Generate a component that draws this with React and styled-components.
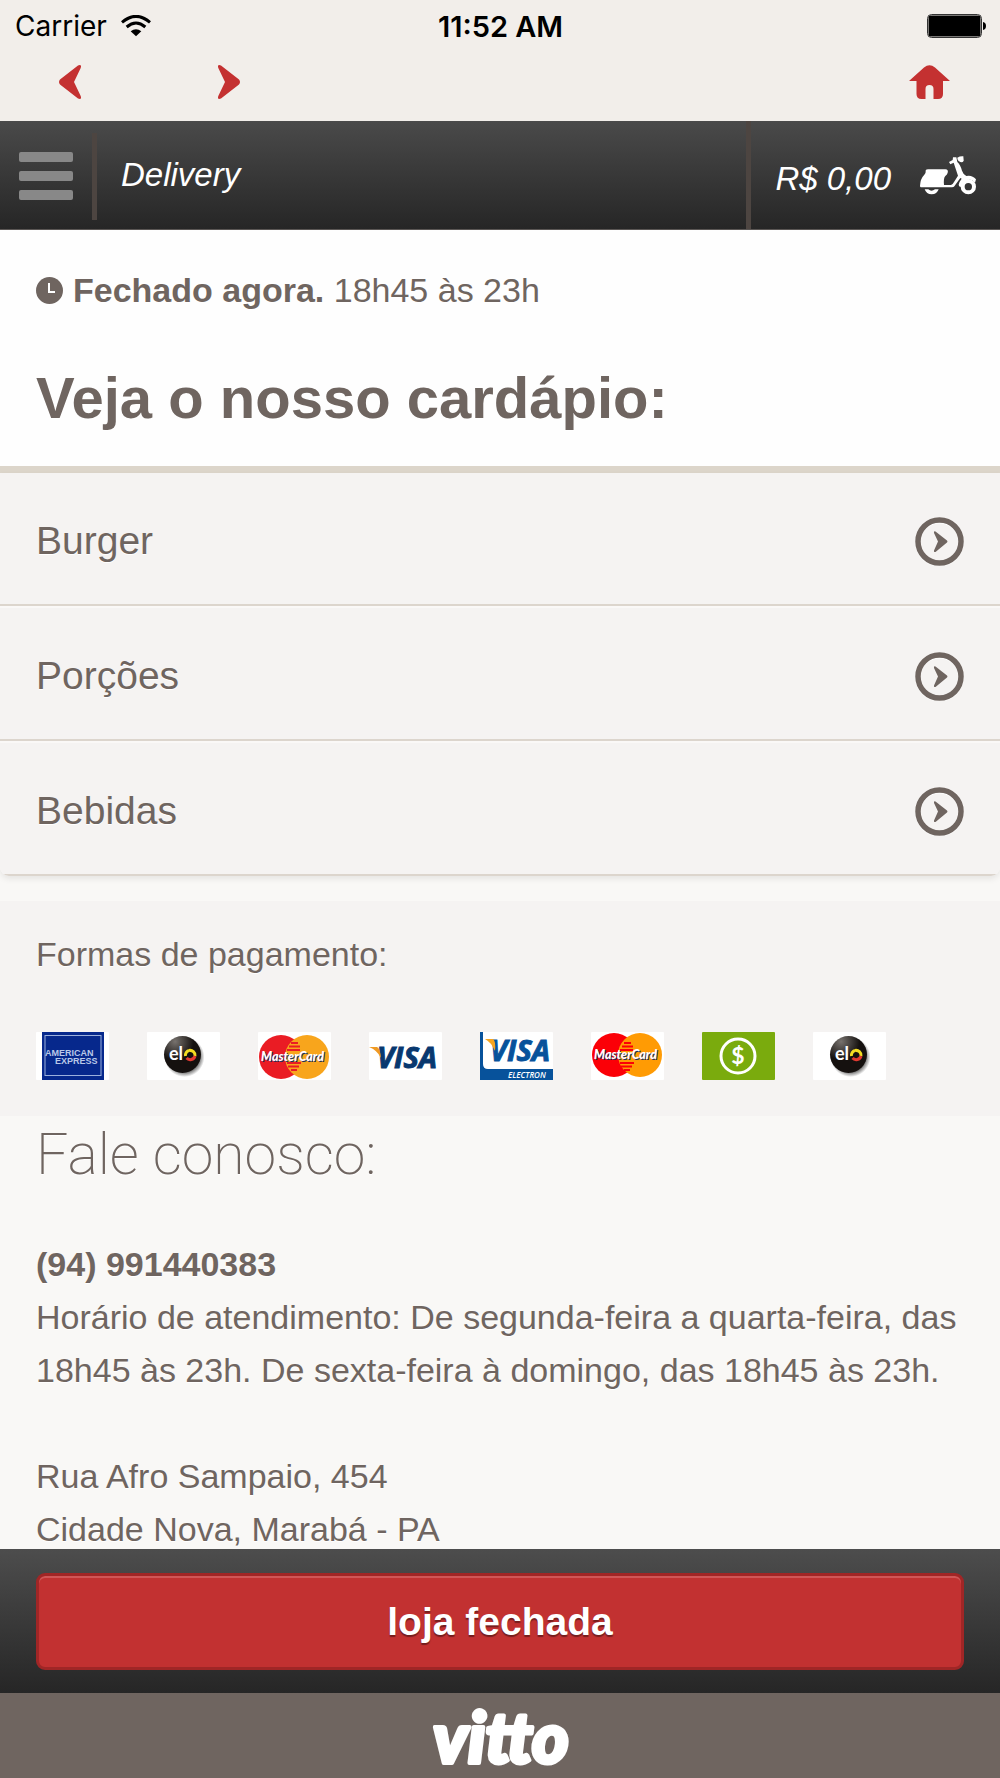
import React from 'react';
import styled, { createGlobalStyle } from 'styled-components';

const GlobalStyle = createGlobalStyle`
  * {
    box-sizing: border-box;
  }

  body {
    margin: 0;
    background: #f9f8f6;
    color: #6f6560;
    font-family: 'Liberation Sans', Arial, sans-serif;
    font-size: 34px;
  }

  svg {
    display: block;
    flex: none;
  }
`;

const Screen = styled.div`
  display: flex;
  flex-direction: column;
  height: 100vh;
`;

const TopBar = styled.div`
  flex: none;
  padding-bottom: 9px;
  background: #f2eeea;
`;

const StatusBar = styled.div`
  display: grid;
  grid-template-columns: 1fr auto 1fr;
  align-items: center;
  height: 52px;
  padding: 0 14px 0 15px;
  color: #000;
  font-family: Inter, sans-serif;
  font-size: 28px;
`;

const Carrier = styled.div`
  display: flex;
  align-items: center;
  gap: 14px;
`;

const Time = styled.time`
  font-size: 29px;
  font-weight: 600;
`;

const Battery = styled.div`
  justify-self: end;
`;

const BrowserNav = styled.nav`
  display: flex;
  align-items: center;
  height: 60px;
  padding: 0 50px 0 59px;
`;

const IconButton = styled.button`
  margin: 0;
  padding: 0;
  border: 0;
  background: none;
  color: #c43131;
  cursor: pointer;

  & + & {
    margin-left: 137px;
  }

  &:last-child {
    margin-left: auto;
  }
`;

const Header = styled.header`
  display: flex;
  flex: none;
  align-items: center;
  height: 109px;
  border-bottom: 1px solid #5a5654;
  background: linear-gradient(#4a4a4a, #262626);
  color: #fff;
  font-size: 33px;
  font-style: italic;
`;

const MenuButton = styled.button`
  display: flex;
  flex-direction: column;
  justify-content: center;
  gap: 9px;
  width: 97px;
  height: 87px;
  margin: 2px 0 0;
  padding: 0 19px;
  border: 0;
  border-right: 5px solid #4d4541;
  background: none;
  cursor: pointer;
`;

const MenuBar = styled.span`
  width: 54px;
  height: 10px;
  border-radius: 2px;
  background: #888;
`;

const HeaderTitle = styled.span`
  flex: 1;
  padding: 0 24px;
`;

const Cart = styled.a`
  display: flex;
  align-items: center;
  gap: 29px;
  height: 100%;
  padding: 0 24px;
  border-left: 5px solid #4d4541;
  color: inherit;
  text-decoration: none;
`;

const CartTotal = styled.span`
  padding-top: 8px;
`;

const Content = styled.main`
  flex: 1;
  min-height: 0;
  overflow-y: auto;
  scrollbar-width: none;
  text-shadow: 0 1px 0 #fff;
`;

const Intro = styled.section`
  padding: 40px 36px 36px;
  border-bottom: 7px solid #dcd5ca;
  background: #fefefe;
`;

const Hours = styled.p`
  display: flex;
  align-items: center;
  gap: 10px;
  margin: 0 0 56px;
  line-height: 40px;
`;

const Title = styled.h1`
  margin: 0;
  font-size: 58px;
  line-height: 64px;
`;

const MenuList = styled.ul`
  margin: 0 0 25px;
  padding: 0;
  overflow: hidden;
  border-radius: 0 0 9px 9px;
  box-shadow: 0 3px 6px rgba(0, 0, 0, 0.08);
  list-style: none;
`;

const MenuLink = styled.a`
  display: flex;
  align-items: center;
  justify-content: space-between;
  padding: 46px 36px 38px;
  border-bottom: 2px solid #dcd5cd;
  background: #f5f3f2;
  box-shadow: inset 0 2px 0 #faf8f7;
  color: inherit;
  font-size: 39px;
  line-height: 44px;
  text-decoration: none;

  li:first-child > & {
    padding-top: 44px;
    box-shadow: none;
  }
`;

const MenuLabel = styled.span`
  padding-bottom: 2px;
`;

const Payments = styled.section`
  padding: 33px 36px 36px;
  background: #f5f3f2;
`;

const PaymentsTitle = styled.h2`
  margin: 0 0 58px;
  font-size: 34px;
  font-weight: 400;
  line-height: 40px;
`;

const CardList = styled.ul`
  display: flex;
  flex-wrap: wrap;
  gap: 38px;
  margin: 0;
  padding: 0;
  list-style: none;
  text-shadow: none;
`;

const Contact = styled.section`
  padding: 7px 36px 0;
`;

const ContactTitle = styled.h2`
  margin: 0 0 51px;
  font-family: Roboto, sans-serif;
  font-size: 57px;
  font-weight: 200;
  line-height: 64px;
`;

const ContactText = styled.p`
  margin: 0 0 53px;
  line-height: 53px;
`;

const OrderBar = styled.div`
  flex: none;
  padding: 24px 36px 23px;
  background: linear-gradient(#4d4d4d, #262626);
`;

const OrderButton = styled.button`
  display: block;
  width: 100%;
  height: 97px;
  border: 3px solid #a02626;
  border-radius: 9px;
  background: #c23131;
  box-shadow: inset 0 2px 0 #cf5757;
  color: #fff;
  font-family: inherit;
  font-size: 39px;
  font-weight: 700;
  text-shadow: 0 2px 1px rgba(0, 0, 0, 0.4);
`;

const Footer = styled.footer`
  display: flex;
  flex: none;
  align-items: center;
  justify-content: center;
  height: 85px;
  background: #6f6560;
`;

const WifiIcon = () => (
  <svg width="30" height="22" viewBox="0 0 90 66" aria-hidden="true">
    <path d="M3 22 Q45 -14 87 22" fill="none" stroke="#000" strokeWidth="9" />
    <path d="M17 36 Q45 12 73 36" fill="none" stroke="#000" strokeWidth="9" />
    <path d="M29 49 Q45 37 61 49 L45 64Z" />
  </svg>
);

const BatteryIcon = () => (
  <svg width="59" height="24" viewBox="0 0 59 24" role="img" aria-label="Bateria">
    <rect x="0.5" y="0.5" width="54" height="23" rx="4" fill="none" stroke="#333" />
    <rect x="1.5" y="1.5" width="52" height="21" rx="2" />
    <path d="M56 8 Q59 8.500 59 12 Q59 15.500 56 16Z" />
  </svg>
);

const ArrowIcon = ({ flip }) => (
  <svg width="22" height="34" viewBox="0 0 22 34" fill="currentColor" aria-hidden="true">
    <path
      d="M3 0.500 L21 14.500 Q23 17 21 19.500 L3 33.500 Q-1 35 0.300 31 L7 17 L0.300 3 Q-1 -1 3 0.500Z"
      transform={flip ? 'matrix(-1 0 0 1 22 0)' : undefined}
    />
  </svg>
);

const HomeIcon = () => (
  <svg width="41" height="34" viewBox="0 0 41 34" fill="currentColor" aria-hidden="true">
    <path d="M0 16 L15 2.500 Q20.500 -2.200 26 2.500 L41 16 H34 V29 Q34 34 29 34 H24.500 V24 Q24.500 20 20.500 20 Q16.500 20 16.500 24 V34 H12.500 Q7.500 34 7.500 29 V16Z" />
  </svg>
);

const ScooterIcon = () => (
  <svg width="56" height="39" viewBox="0 0 168 117" fill="#fff" aria-hidden="true">
    <path d="M17 46 Q16 40 24 40 H76 Q86 41 83 50 Q82 56 76 60 Q70 66 72 87 H93 Q98 86 102 78 L114 59 L101 20 L91 25 L87 18 L98 12 L99 4 H109 L112 18 Q121 26 126 44 Q130 56 139 60 Q156 56 168 70 L165 80 Q153 65 138 73 Q126 80 122 93 Q116 92 116 86 Q117 78 125 68 L121 66 L103 91 Q101 94 96 94 H3 Q0 94 0 89 Q1 68 13 56 Q18 52 17 46Z" />
    <path d="M112 5 Q120 0 130 1 L131 14 Q128 20 121 18 Q112 14 112 5Z" />
    <path d="M14 100 H25 Q34 108 45 100 H56 Q51 115 35 115 Q19 115 14 100Z" />
    <circle cx="145" cy="92" r="17" fill="none" stroke="#fff" strokeWidth="12" />
  </svg>
);

const ClockIcon = () => (
  <svg width="27" height="27" viewBox="0 0 27 27" aria-hidden="true">
    <circle cx="13.500" cy="13.500" r="13.500" fill="#6f6560" />
    <path d="M13 6 V15 H19" fill="none" stroke="#fff" strokeWidth="2" />
  </svg>
);

const CircleArrowIcon = () => (
  <svg width="49" height="49" viewBox="0 0 49 49" aria-hidden="true">
    <circle cx="24.500" cy="25.500" r="21.500" fill="none" stroke="#fff" strokeWidth="5" />
    <circle cx="24.500" cy="24.500" r="21.500" fill="none" stroke="#6f6560" strokeWidth="5.500" />
    <path
      d="M20.500 14.500 L32 23.500 Q33 24.500 32 25.500 L20.500 35 Q18.500 35.500 19 33.500 L23 24.500 L19 16 Q18.500 13.500 20.500 14.500Z"
      fill="#6f6560"
    />
  </svg>
);

const CardFrame = ({ label, background = '#fff', children }) => (
  <svg width="73" height="48" viewBox="0 0 73 48" role="img" aria-label={label}>
    <rect width="73" height="48" rx="1" fill={background} />
    {children}
  </svg>
);

const Amex = () => (
  <CardFrame label="American Express">
    <rect x="6" width="62" height="48" fill="#06288c" />
    <rect x="9" y="3.500" width="56" height="40" fill="none" stroke="#9bb0dc" />
    <g fill="#b9c8e8" fontFamily="Liberation Sans" fontWeight="700" fontSize="9">
      <text x="9" y="24">AMERICAN</text>
      <text x="19" y="32">EXPRESS</text>
    </g>
  </CardFrame>
);

const Elo = () => (
  <CardFrame label="Elo">
    <defs>
      <radialGradient id="eloShadow">
        <stop offset="0.700" stopColor="#555" />
        <stop offset="1" stopColor="#fff" />
      </radialGradient>
      <radialGradient id="eloBall" cx="0.300" cy="0.150" r="0.500">
        <stop offset="0" stopColor="#77726e" />
        <stop offset="1" stopColor="#15110f" />
      </radialGradient>
    </defs>
    <circle cx="37.500" cy="25" r="20" fill="url(#eloShadow)" />
    <circle cx="35.500" cy="22.500" r="18.500" fill="url(#eloBall)" />
    <text x="22" y="28" fill="#fff" fontFamily="Lato" fontWeight="700" fontSize="18">el</text>
    <g fill="none" strokeWidth="3">
      <path d="M38.500 24 A5 5 0 0 1 42 18.500" stroke="#f3dc22" />
      <path d="M42 18.500 A5 5 0 0 1 48 24" stroke="#f3dc22" />
      <path d="M48 24 A5 5 0 0 1 39.500 26" stroke="#e33a31" />
    </g>
  </CardFrame>
);

const MasterCard = ({ bright }) => {
  const red = bright ? '#fb0007' : '#ea1c24';
  return (
    <CardFrame label="MasterCard">
      <circle cx="23" cy={bright ? 23 : 25} r="22" fill={red} />
      <circle cx="49" cy={bright ? 23 : 25} r="22" fill={bright ? '#ff9b04' : '#f8a51c'} />
      <path
        d="M33 11 H40 M31 14.500 H42 M29 18 H42 M29 31 H43 M30 34.500 H41 M33 38 H39"
        stroke={red}
        strokeWidth="2"
      />
      <g fontFamily="Lato" fontStyle="italic" fontWeight="900" fontSize="12.500">
        <text x="4" y={bright ? 28 : 30} fill="#20305e">MasterCard</text>
        <text x="3" y={bright ? 27 : 29} fill="#fff">MasterCard</text>
      </g>
    </CardFrame>
  );
};

const Visa = () => (
  <CardFrame label="Visa">
    <text
      x="8"
      y="36"
      fill="#08386f"
      stroke="#08386f"
      fontFamily="Open Sans"
      fontStyle="italic"
      fontWeight="700"
      fontSize="29"
    >
      VISA
    </text>
    <path d="M0 15 H8 Q11 16 12 26 Q8 18 0 15Z" fill="#f09a23" />
  </CardFrame>
);

const VisaElectron = () => (
  <CardFrame label="Visa Electron">
    <path d="M0 0 H3 V32 Q3 37 8 37 H73 V48 H0Z" fill="#07529b" />
    <g fontFamily="Open Sans" fontStyle="italic">
      <text x="10" y="29" fill="#07529b" stroke="#07529b" fontWeight="700" fontSize="29">
        VISA
      </text>
      <text x="28" y="46" fill="#fff" fontWeight="600" fontSize="8">ELECTRON</text>
    </g>
    <path d="M5 7 H13 Q16 9 15 19 Q11 10 5 7Z" fill="#f5a51f" />
  </CardFrame>
);

const Cash = () => (
  <CardFrame label="Dinheiro" background="#7aab0d">
    <circle cx="36" cy="24" r="17" fill="none" stroke="#fff" strokeWidth="3" />
    <text
      x="36"
      y="32"
      fill="#fff"
      textAnchor="middle"
      fontFamily="Lato"
      fontWeight="700"
      fontSize="23"
    >
      $
    </text>
  </CardFrame>
);

const VittoLogo = () => (
  <svg width="160" height="85" viewBox="0 0 160 85" overflow="visible" role="img" aria-label="vitto">
    <text
      x="81"
      y="70"
      fill="#fff"
      stroke="#fff"
      strokeWidth="4"
      strokeLinejoin="round"
      textAnchor="middle"
      fontFamily="Lato"
      fontStyle="italic"
      fontWeight="900"
      fontSize="70"
    >
      vitto
    </text>
  </svg>
);

const categories = ['Burger', 'Porções', 'Bebidas'];

const App = () => (
  <>
    <GlobalStyle />
    <Screen>
      <TopBar>
        <StatusBar>
          <Carrier>
            Carrier
            <WifiIcon />
          </Carrier>
          <Time>11:52 AM</Time>
          <Battery>
            <BatteryIcon />
          </Battery>
        </StatusBar>
        <BrowserNav>
          <IconButton type="button" aria-label="Voltar">
            <ArrowIcon flip />
          </IconButton>
          <IconButton type="button" aria-label="Avançar">
            <ArrowIcon />
          </IconButton>
          <IconButton type="button" aria-label="Início">
            <HomeIcon />
          </IconButton>
        </BrowserNav>
      </TopBar>
      <Header>
        <MenuButton type="button" aria-label="Menu">
          <MenuBar />
          <MenuBar />
          <MenuBar />
        </MenuButton>
        <HeaderTitle>Delivery</HeaderTitle>
        <Cart href="#pedido">
          <CartTotal>R$ 0,00</CartTotal>
          <ScooterIcon />
        </Cart>
      </Header>
      <Content>
        <Intro>
          <Hours>
            <ClockIcon />
            <span>
              <strong>Fechado agora.</strong> 18h45 às 23h
            </span>
          </Hours>
          <Title>Veja o nosso cardápio:</Title>
        </Intro>
        <MenuList>
          {categories.map((category) => (
            <li key={category}>
              <MenuLink href={`#${category.toLowerCase()}`}>
                <MenuLabel>{category}</MenuLabel>
                <CircleArrowIcon />
              </MenuLink>
            </li>
          ))}
        </MenuList>
        <Payments>
          <PaymentsTitle>Formas de pagamento:</PaymentsTitle>
          <CardList>
            <li><Amex /></li>
            <li><Elo /></li>
            <li><MasterCard /></li>
            <li><Visa /></li>
            <li><VisaElectron /></li>
            <li><MasterCard bright /></li>
            <li><Cash /></li>
            <li><Elo /></li>
          </CardList>
        </Payments>
        <Contact>
          <ContactTitle>Fale conosco:</ContactTitle>
          <ContactText>
            <strong>(94) 991440383</strong>
            <br />
            Horário de atendimento: De segunda-feira a quarta-feira, das 18h45 às 23h. De
            sexta-feira à domingo, das 18h45 às 23h.
          </ContactText>
          <ContactText>
            Rua Afro Sampaio, 454
            <br />
            Cidade Nova, Marabá - PA
          </ContactText>
        </Contact>
      </Content>
      <OrderBar>
        <OrderButton type="button">loja fechada</OrderButton>
      </OrderBar>
      <Footer>
        <VittoLogo />
      </Footer>
    </Screen>
  </>
);

export default App;
